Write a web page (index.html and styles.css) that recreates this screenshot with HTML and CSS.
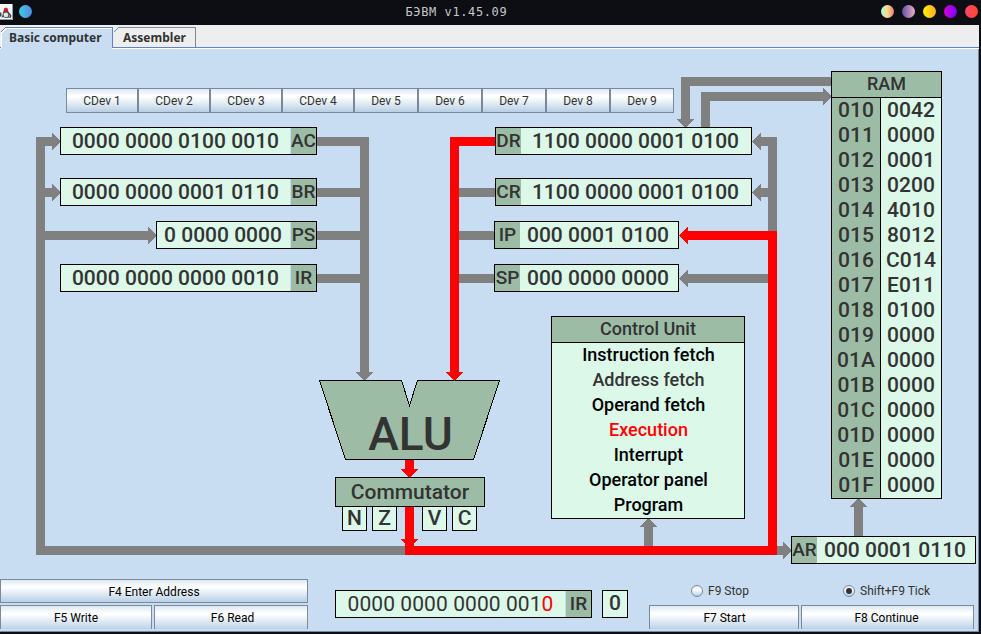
FILE: index.html
```html
<!DOCTYPE html>
<html lang="en">
<head>
<meta charset="utf-8">
<title>БЭВМ v1.45.09</title>
<link rel="stylesheet" href="styles.css">
</head>
<body>
<header class="titlebar">
  <svg class="app-icon" width="13" height="16" viewBox="0 0 13 16"><rect width="13" height="16" fill="#f4f6f8"/><path d="M12.500 0V15.500H0" fill="none" stroke="#7fa3bd"/><path d="M0 8.500H1.500V12L0 13ZM3 9L4 5L6 3.500L8 6L8.500 8L10.500 10L11.500 12L10.500 14L8.500 13.500L6 14L3 13L1.500 14L2.500 11Z" fill="#444"/><path d="M4 9L7 8.500L8.500 10.500L7.500 13H4.500L3.500 11Z" fill="#e8e8e8"/><path d="M9 11L10 11.500V13H9Z" fill="#aaa"/><circle cx="6" cy="5.800" r="2" fill="#d3201c"/></svg>
  <i class="dot dot-blue"></i>
  <h1 class="title">БЭВМ v1.45.09</h1>
  <div class="window-buttons"><i class="dot d1"></i><i class="dot d2"></i><i class="dot d3"></i><i class="dot d4"></i><i class="dot d5"></i></div>
</header>
<main class="window">
  <nav class="tabs">
    <svg class="tabs-shape" width="979" height="24" viewBox="0 0 979 24" shape-rendering="crispEdges">
      <rect y="22" width="979" height="1" fill="#6382bf"/><rect y="23" width="979" height="1" fill="#fff"/>
      <path d="M1 24V7L6 2H112V24Z" fill="#c8ddf2"/>
      <path d="M1.5 23V8L6 3.5H112" fill="none" stroke="#fff"/>
      <path d="M0.5 7.5L5.5 2.5H112.5V22.5" fill="none" stroke="#6382bf"/>
      <path d="M113.5 7.5L118.5 2.5H195.5V22" fill="none" stroke="#7a8a99"/>
    </svg>
    <span class="tab tab-basic">Basic computer</span>
    <span class="tab">Assembler</span>
  </nav>
  <section class="diagram">
    <svg class="wires" width="978" height="530" viewBox="0 49 978 530" shape-rendering="crispEdges">
      <g class="wire">
        <path d="M410 550.500H40.500V141.500H53M40.500 192.500H53M40.500 235.500H149"/>
        <path d="M317 141.500H364.500V373M317 192.500H364M317 235.500H364M317 278.500H364"/>
        <path d="M459 192.500H496M459 235.500H496M459 278.500H496"/>
        <path d="M772.500 235V141.500H760M772 192.500H760M770 278.500H687"/>
        <path d="M831 81.500H685.500V120M705.500 127V96.500H824M648.500 546V526M777 550.500H784M858.500 536V506"/>
      </g>
      <path class="head" d="M52 133L61 141.500L52 150ZM52 184L61 192.500L52 201ZM148 227L157 235.500L148 244ZM356 372H373L364.500 381ZM761 133L752 141.500L761 150ZM761 184L752 192.500L761 201ZM688 270L679 278.500L688 287ZM677 119H694L685.500 128ZM823 88L832 96.500L823 105ZM640 527H657L648.500 518ZM783 542L792 550.500L783 559ZM850 507H867L858.500 498Z"/>
      <path class="alu" d="M319.500 380.500H401.500L409.500 405.500L417.500 380.500H499.500L473.500 459.500H345.500Z"/>
      <g class="wire active">
        <path d="M496 141.500H454.500V373M409.500 460V470M409.500 506V550.500H772.500V235.500H687"/>
      </g>
      <path class="head active" d="M446 372H463L454.500 381ZM401 469H418L409.500 478ZM401 539H418L409.500 548ZM688 227L679 235.500L688 244Z"/>
    </svg>
    <div class="devices">
      <button>CDev 1</button><button>CDev 2</button><button>CDev 3</button><button>CDev 4</button><button class="dev">Dev 5</button><button class="dev">Dev 6</button><button class="dev">Dev 7</button><button class="dev">Dev 8</button><button class="dev">Dev 9</button>
    </div>
    <div class="reg ac"><span class="value">0000 0000 0100 0010</span><b>AC</b></div>
    <div class="reg br"><span class="value">0000 0000 0001 0110</span><b>BR</b></div>
    <div class="reg ps"><span class="value">0 0000 0000</span><b>PS</b></div>
    <div class="reg ir"><span class="value">0000 0000 0000 0010</span><b>IR</b></div>
    <div class="reg dr"><b>DR</b><span class="value">1100 0000 0001 0100</span></div>
    <div class="reg cr"><b>CR</b><span class="value">1100 0000 0001 0100</span></div>
    <div class="reg ip"><b>IP</b><span class="value">000 0001 0100</span></div>
    <div class="reg sp"><b>SP</b><span class="value">000 0000 0000</span></div>
    <div class="reg ar"><b>AR</b><span class="value">000 0001 0110</span></div>
    <div class="alu-label">ALU</div>
    <div class="commutator">Commutator</div>
    <div class="flags"><span>N</span><span>Z</span><span class="gap">V</span><span>C</span></div>
    <div class="control">
      <h2>Control Unit</h2>
      <div class="stages"><p>Instruction fetch</p><p class="idle">Address fetch</p><p>Operand fetch</p><p class="current">Execution</p><p>Interrupt</p><p>Operator panel</p><p>Program</p></div>
    </div>
    <div class="ram">
      <h2>RAM</h2>
      <div class="cells">
        <div class="addresses"><span>010</span><span>011</span><span>012</span><span>013</span><span>014</span><span>015</span><span>016</span><span>017</span><span>018</span><span>019</span><span>01A</span><span>01B</span><span>01C</span><span>01D</span><span>01E</span><span>01F</span></div>
        <div class="words"><span>0042</span><span>0000</span><span>0001</span><span>0200</span><span>4010</span><span>8012</span><span>C014</span><span>E011</span><span>0100</span><span>0000</span><span>0000</span><span>0000</span><span>0000</span><span>0000</span><span>0000</span><span>0000</span></div>
      </div>
    </div>
  </section>
  <footer class="panel">
    <div class="left-keys">
      <button class="wide">F4 Enter Address</button>
      <button class="key">F5 Write</button><button class="key read">F6 Read</button>
    </div>
    <div class="reg input"><span class="value">0000 0000 0000 001<em>0</em></span><b>IR</b></div>
    <div class="bit">0</div>
    <div class="right-keys">
      <label class="stop"><i class="radio"></i>F9 Stop</label>
      <label class="tick"><i class="radio on"></i>Shift+F9 Tick</label>
      <button class="key start">F7 Start</button><button class="key continue">F8 Continue</button>
    </div>
  </footer>
</main>
</body>
</html>
```
FILE: styles.css
```css
* { box-sizing: border-box; }
html, body { margin: 0; height: 634px; overflow: hidden; }
body { background: #0c0e14; color: #333; font-family: Roboto, sans-serif; }
h1, h2, p { margin: 0; font-weight: 500; }

.titlebar { display: flex; align-items: center; height: 25px; padding-bottom: 2px; position: relative; }
.app-icon { margin-top: 1px; }
.dot { display: block; width: 13px; height: 13px; border-radius: 50%; }
.dot-blue { margin-left: 6px; background: linear-gradient(90deg, #37d0dc, #5b86e5); }
.title { margin-left: 373.500px; padding-top: 2px; font: 12px/23px "DejaVu Sans Mono", monospace; color: #c5c8c6; letter-spacing: .6px; }
.window-buttons { display: flex; gap: 8px; margin-left: auto; margin-right: 3px; }
.d1 { background: linear-gradient(90deg, #a8ffdf, #fbd786 50%, #f7797d); }
.d2 { background: linear-gradient(90deg, #654ea3, #eaafc8); }
.d3 { background: linear-gradient(90deg, #fff200, #ffaa2b); }
.d4 { background: linear-gradient(90deg, #d800d8, #7a00ff); }
.d5 { background: linear-gradient(90deg, #ff416c, #ff4b2b); }

.window { width: 979px; height: 607px; background: #c8ddf2; border-right: 1px solid #7a8a99; border-bottom: 1px solid #7a8a99; }
.tabs { position: relative; display: flex; width: 979px; height: 24px; background: #eee; font: bold 12px/26px "Noto Sans", sans-serif; }
.tabs-shape { position: absolute; left: 0; top: 0; }
.tab { position: relative; margin-left: 9px; }
.tab-basic { width: 105px; }

button { margin: 0; padding: 2px 0 0; border: 1px solid #7a8a99; border-radius: 0; background: linear-gradient(#dde8f3, #fff 30%, #fff 35%, #b8cfe5); font: 12px/21px Roboto, sans-serif; color: #000; }

.diagram { position: relative; height: 530px; }
.wires { position: absolute; left: 0; top: 0; }
.wire path { fill: none; stroke: #808080; stroke-width: 9; }
.head { fill: #808080; }
.wire.active path { stroke: #f00; }
.head.active { fill: #f00; }
.alu { fill: #9dbca5; stroke: #000; }

.devices { position: absolute; left: 66px; top: 39px; display: flex; }
.devices button { width: 72px; height: 25px; color: #333; }
.devices .dev { width: 64px; }

.reg { display: flex; width: 257px; height: 28px; border: 1px solid #000; background: #dbf8e9; font-size: 21px; font-weight: 500; line-height: 26px; white-space: nowrap; }
.diagram .reg { position: absolute; }
.value { flex: 1; padding-right: 1px; text-align: center; letter-spacing: .03px; }
.reg b { width: 25px; background: #9dbca5; font-size: 19px; font-weight: 500; text-align: center; }
.value + b { box-shadow: -1px 0 #c8ddf2; }
.ac { left: 60px; top: 78px; }
.br { left: 60px; top: 129px; }
.reg.ps { left: 156px; top: 172px; width: 161px; }
.ps .value { letter-spacing: 0; padding-right: 2px; }
.ir { left: 60px; top: 215px; }
.dr { left: 495px; top: 78px; }
.cr { left: 495px; top: 129px; }
.reg.ip, .reg.sp { left: 494px; width: 185px; }
.ip { top: 172px; }
.sp { top: 215px; }
.reg.ar { left: 791px; top: 487px; width: 185px; }
.ip .value, .sp .value, .ar .value { padding-right: 2px; }

.alu-label { position: absolute; left: 320px; top: 360px; width: 181px; text-align: center; font-size: 46px; font-weight: 500; line-height: 50px; }
.commutator { position: absolute; left: 335px; top: 428px; width: 150px; height: 30px; border: 1px solid #000; background: #9dbca5; text-align: center; font-size: 21px; font-weight: 500; line-height: 28px; }
.flags { position: absolute; left: 342px; top: 457px; display: flex; gap: 5px; }
.flags span { width: 25px; height: 25px; border: 1px solid #000; background: #dbf8e9; text-align: center; font-size: 21px; font-weight: 500; line-height: 22px; }
.flags .gap { margin-left: 20px; }

.control { position: absolute; left: 551px; top: 267px; width: 194px; height: 203px; border: 1px solid #000; background: #dbf8e9; text-align: center; font-size: 18px; font-weight: 500; line-height: 25px; color: #000; }
h2 { height: 26px; border-bottom: 1px solid #000; background: #9dbca5; color: #333; font-size: 18px; line-height: 24px; letter-spacing: 0; text-align: center; }
.stages { margin-top: -1px; padding-left: 1px; }
.control h2 { position: relative; z-index: 1; }
.idle { color: #333; }
.current { color: #f00; }

.ram { position: absolute; left: 831px; top: 22px; width: 111px; height: 428px; border: 1px solid #000; background: #dbf8e9; font-size: 21px; font-weight: 500; }
.cells { display: flex; height: 400px; }
.cells span { display: block; height: 25px; line-height: 25px; text-align: center; }
.addresses { width: 49px; border-right: 1px solid #000; background: #9dbca5; }
.words { flex: 1; letter-spacing: .12px; }

.panel { display: flex; align-items: flex-start; height: 50px; overflow: hidden; }
.left-keys { display: grid; grid-template-columns: 152px 154px; grid-template-rows: 24px 26px; gap: 2px; width: 308px; }
.wide { grid-column: 1 / 3; }
.key { padding-top: 0; }
.read { padding-left: 3px; }
.start { padding-left: 1px; }
.continue { padding-right: 2px; }
.input { margin: 11px 0 0 27px; }
.input .value { font-weight: 400; letter-spacing: .08px; }
em { font-style: normal; color: #f00; }
.bit { width: 26px; height: 28px; margin: 11px 0 0 10px; border: 1px solid #000; background: #dbf8e9; text-align: center; font-size: 21px; font-weight: 500; line-height: 25px; }
.right-keys { display: grid; grid-template-columns: 150px 173px; grid-template-rows: 24px 26px; gap: 2px; margin-left: 21px; }
label { display: flex; align-items: center; gap: 5px; font-size: 12px; }
.stop { padding-left: 42px; }
.tick { padding-left: 42px; }
.radio { display: grid; place-items: center; width: 12px; height: 12px; border: 1px solid #7a8a99; border-radius: 50%; background: linear-gradient(#dde8f3, #fff 35%, #b8cfe5); }
.radio.on::after { content: ""; width: 6px; height: 6px; border-radius: 50%; background: #333; }
```
